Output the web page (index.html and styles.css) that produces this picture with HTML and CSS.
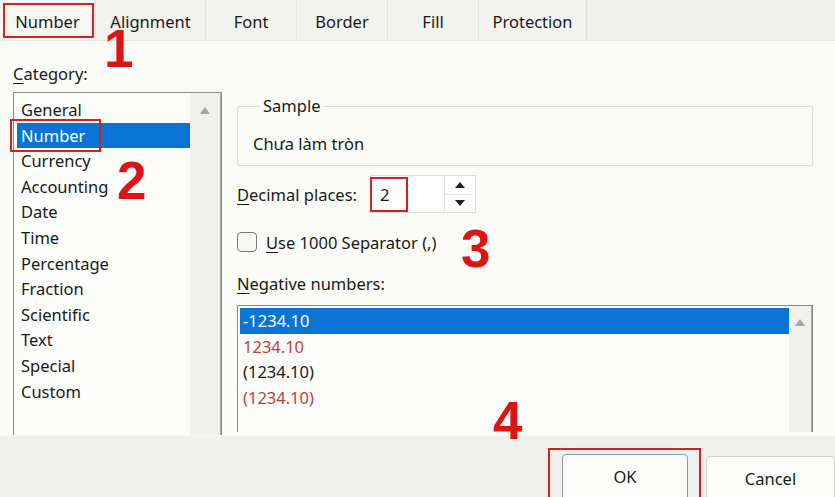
FILE: index.html
```html
<!DOCTYPE html>
<html>
<head>
<meta charset="utf-8">
<link rel="stylesheet" href="styles.css">
</head>
<body>
<div class="page">
  <div class="tabs">
    <div class="tab tab-number">Number</div>
    <div class="tab tab-align">Alignment</div>
    <div class="tab tab-font">Font</div>
    <div class="tab tab-border">Border</div>
    <div class="tab tab-fill">Fill</div>
    <div class="tab tab-prot">Protection</div>
  </div>
  <div class="main">
    <div class="left">
      <div class="label"><u>C</u>ategory:</div>
      <div class="list cat-list">
        <div class="items">
          <div class="item">General</div>
          <div class="item sel">Number</div>
          <div class="item">Currency</div>
          <div class="item">Accounting</div>
          <div class="item">Date</div>
          <div class="item">Time</div>
          <div class="item">Percentage</div>
          <div class="item">Fraction</div>
          <div class="item">Scientific</div>
          <div class="item">Text</div>
          <div class="item">Special</div>
          <div class="item">Custom</div>
        </div>
        <div class="scroll"><span class="arrow-up"></span></div>
      </div>
    </div>
    <div class="right">
      <fieldset class="sample">
        <legend>Sample</legend>
        <div class="sample-text">Chưa làm tròn</div>
      </fieldset>
      <div class="dec-row">
        <span class="dec-label"><u>D</u>ecimal places:</span>
        <div class="spin">
          <span class="spin-val">2</span>
          <div class="spin-btns">
            <span class="spin-up"></span>
            <span class="spin-down"></span>
          </div>
        </div>
      </div>
      <div class="chk-row">
        <span class="chk"></span>
        <span class="chk-label"><u>U</u>se 1000 Separator (,)</span>
      </div>
      <div class="label neg-label"><u>N</u>egative numbers:</div>
      <div class="list neg-list">
        <div class="items">
          <div class="item sel">-1234.10</div>
          <div class="item red">1234.10</div>
          <div class="item">(1234.10)</div>
          <div class="item red">(1234.10)</div>
        </div>
        <div class="scroll"><span class="arrow-up"></span></div>
      </div>
    </div>
  </div>
  <div class="footer">
    <button class="btn btn-ok">OK</button>
    <button class="btn btn-cancel">Cancel</button>
  </div>

  <div class="mark box-tab"></div>
  <div class="mark box-cat"></div>
  <div class="mark box-dec"></div>
  <div class="mark box-ok"></div>
  <div class="num num1">1</div>
  <div class="num num2">2</div>
  <div class="num num3">3</div>
  <div class="num num4">4</div>
</div>
</body>
</html>
```
FILE: styles.css
```css
* { box-sizing: border-box; }
html, body { margin: 0; padding: 0; }
body {
  width: 835px; height: 497px; overflow: hidden;
  font-family: "Noto Sans", "Open Sans", sans-serif;
  font-size: 16.5px; color: #1a1a1a;
  background: #fbfbf7;
}
.page { position: relative; width: 835px; height: 497px; }

.tabs {
  display: flex; height: 41px;
  background: #f0f0ec;
  border-bottom: 1px solid #e6e6e1;
}
.tab {
  display: flex; align-items: center; justify-content: center;
  height: 40px; padding-top: 3px;
  border-right: 1px solid #e3e3de;
  background: #f2f2ee;
}
.tab-number { width: 96px; background: #f7f7f3; }
.tab-align { width: 110px; }
.tab-font { width: 91px; }
.tab-border { width: 91px; }
.tab-fill { width: 91px; }
.tab-prot { width: 108px; }

.main { display: flex; height: 394px; padding-left: 13px; }
.left { width: 209px; padding-top: 23px; }
.label { height: 20px; line-height: 20px; }
.label u, .dec-label u, .chk-label u { text-decoration-thickness: 1px; text-underline-offset: 3px; }

.list {
  display: flex;
  border: 1px solid #8a8a88;
  border-bottom: none;
  background: #fcfcfa;
}
.cat-list { margin-top: 8px; height: 343px; }
.items { flex: 1; padding: 4px 0 0 3px; }
.item { height: 25.6px; line-height: 25.6px; padding-left: 4px; white-space: nowrap; }
.item.sel { background: #0a74d4; color: #fff; }
.item.red { color: #c43c3c; }
.scroll {
  width: 31px; background: #f0f0ee;
  display: flex; justify-content: center; padding-top: 14px;
  border-right: 1px solid #a9a9a6;
}
.arrow-up {
  width: 0; height: 0;
  border-left: 5px solid transparent; border-right: 5px solid transparent;
  border-bottom: 7px solid #a4a4a2;
}

.right { width: 576px; margin-left: 15px; padding-top: 55px; }
.sample {
  margin: 0; padding: 18px 15px 9px 15px;
  border: 1px solid #deded9; border-radius: 2px;
  height: 70px;
}
.sample legend { padding: 0 3px; margin-left: 7px; line-height: 20px; }
.sample-text { line-height: 20px; }

.dec-row { display: flex; align-items: center; margin-top: 9px; height: 38px; }
.dec-label { width: 133px; }
.spin {
  width: 106px; height: 38px;
  border: 1px solid #dcdcd8; background: #fff;
  display: flex; justify-content: space-between; align-items: center;
}
.spin-val { padding-left: 9px; }
.spin-btns {
  width: 30px; height: 36px; display: flex; flex-direction: column;
  margin-right: 1px;
}
.spin-up, .spin-down {
  flex: 1; display: flex; align-items: center; justify-content: center;
  border-left: 1px solid #e6e6e2;
}
.spin-up { border-bottom: 1px solid #e6e6e2; }
.spin-up::after {
  content: ""; border-left: 5px solid transparent; border-right: 5px solid transparent;
  border-bottom: 6px solid #222;
}
.spin-down::after {
  content: ""; border-left: 5px solid transparent; border-right: 5px solid transparent;
  border-top: 6px solid #222;
}

.chk-row { display: flex; align-items: center; margin-top: 19px; height: 20px; }
.chk {
  width: 20px; height: 20px; border: 1px solid #7a7a78; border-radius: 4px;
  background: #f7f7f4;
}
.chk-label { margin-left: 9px; }

.neg-label { margin-top: 22px; }
.neg-list { margin-top: 11px; height: 127px; }
.neg-list .items { padding: 2px 0 0 2px; }
.neg-list .item { padding-left: 3px; }
.neg-list .scroll { width: 23px; padding-top: 13px; }

.footer {
  height: 62px; background: #f0f0ec;
  border-top: 1px solid #f7f7f4;
  display: flex; align-items: flex-start; padding-top: 18px; padding-left: 562px;
}
.btn {
  font: inherit; color: #1a1a1a;
  height: 50px; background: #fdfdfb;
  border: 1px solid #d2d2ce; border-radius: 4px;
  padding: 0 0 6px 0;
}
.btn-ok { width: 127px; border-color: #7f9bb9; }
.btn-cancel { width: 130px; margin-left: 18px; margin-top: 2px; }

.mark { position: absolute; border: 2px solid #d42222; }
.box-tab { left: 3px; top: 3px; width: 91px; height: 35px; }
.box-cat { left: 10px; top: 119px; width: 91px; height: 33px; }
.box-dec { left: 370px; top: 177px; width: 38px; height: 35px; }
.box-ok { left: 548px; top: 448px; width: 153px; height: 52px; }

.num {
  position: absolute;
  font-family: "Liberation Sans", Arial, sans-serif;
  font-weight: bold; font-size: 53px; line-height: 1;
  color: #de1414;
}
.num1 { left: 104px; top: 22px; }
.num2 { left: 117px; top: 154px; }
.num3 { left: 461px; top: 222px; }
.num4 { left: 493px; top: 394px; }
```
